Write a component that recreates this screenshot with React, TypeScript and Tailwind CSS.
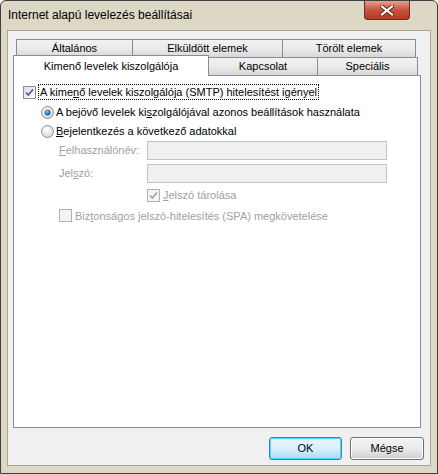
import React from 'react';

const font = { fontFamily: '"Liberation Sans", Arial, sans-serif' };

function CheckBox({ checked, disabled }: { checked?: boolean; disabled?: boolean }) {
  return (
    <span
      className={`relative inline-flex h-[13px] w-[13px] shrink-0 items-center justify-center border ${
        disabled ? 'border-[#b1b1b1] bg-[#f4f4f4]' : 'border-[#8e8f8f] bg-gradient-to-br from-[#dcdcdc] to-[#ffffff]'
      }`}
    >
      {checked && (
        <svg width="11" height="11" viewBox="0 0 11 11">
          <path
            d="M2 5.5 L4.3 8 L9 2.5"
            fill="none"
            stroke={disabled ? '#a4a4a4' : '#4a5f97'}
            strokeWidth="1.8"
          />
        </svg>
      )}
    </span>
  );
}

function Radio({ checked }: { checked?: boolean }) {
  return (
    <svg width="13" height="13" viewBox="0 0 13 13" className="shrink-0">
      <defs>
        <radialGradient id="rg" cx="0.4" cy="0.35" r="0.7">
          <stop offset="0" stopColor="#ffffff" />
          <stop offset="1" stopColor="#d4d4d4" />
        </radialGradient>
        <radialGradient id="dot" cx="0.4" cy="0.35" r="0.7">
          <stop offset="0" stopColor="#8ad2f5" />
          <stop offset="0.6" stopColor="#2b74b8" />
          <stop offset="1" stopColor="#1a4f82" />
        </radialGradient>
      </defs>
      <circle cx="6.5" cy="6.5" r="6" fill="url(#rg)" stroke="#8e8f8f" />
      {checked && <circle cx="6.5" cy="6.5" r="3" fill="url(#dot)" />}
    </svg>
  );
}

function Tab({ label, w, selected }: { label: string; w: string; selected?: boolean }) {
  return (
    <div
      className={`${w} flex items-center justify-center border border-[#898c95] text-[11px] text-black ${
        selected
          ? 'relative z-10 h-[21px] border-b-0 bg-white'
          : 'h-[19px] bg-gradient-to-b from-[#f2f2f2] via-[#ebebeb] to-[#d8d8d8]'
      }`}
    >
      {label}
    </div>
  );
}

export default function App() {
  return (
    <div
      className="flex h-[474px] w-[438px] flex-col rounded-t-[6px] border border-[#3f3f3f] bg-[#ddd8c6] text-black"
      style={font}
    >
      {/* title bar */}
      <div className="flex h-[29px] shrink-0 items-start justify-between">
        <span className="ml-[7px] mt-[7px] text-[12px] leading-[14px] text-black">
          Internet alapú levelezés beállításai
        </span>
        <button className="mr-[27px] flex h-[19px] w-[46px] items-center justify-center rounded-b-[4px] border border-t-0 border-[#6b2a22] bg-gradient-to-b from-[#e5a092] via-[#c6523f] to-[#b73a22]">
          <svg width="14" height="11" viewBox="0 0 14 11">
            <path d="M2 1.5 L12 9.5 M12 1.5 L2 9.5" stroke="#5a2018" strokeWidth="4" strokeLinecap="square" />
            <path d="M2 1.5 L12 9.5 M12 1.5 L2 9.5" stroke="#ffffff" strokeWidth="2.2" strokeLinecap="square" />
          </svg>
        </button>
      </div>

      {/* client area */}
      <div className="mx-[6px] mb-[7px] flex flex-1 flex-col border border-[#aaa594] bg-[#f0f0f0]">
        <div className="flex flex-col pl-[5px] pt-[8px]">
          <div className="flex pl-[3px]">
            <Tab label="Általános" w="w-[117px]" />
            <Tab label="Elküldött elemek" w="w-[151px] -ml-px" />
            <Tab label="Törölt elemek" w="w-[134px] -ml-px" />
          </div>
          <div className="-mt-[3px] flex items-end">
            <Tab label="Kimenő levelek kiszolgálója" w="w-[196px]" selected />
            <Tab label="Kapcsolat" w="w-[110px] -ml-px" />
            <Tab label="Speciális" w="w-[101px] -ml-px" />
          </div>
          {/* panel */}
          <div className="-mt-px flex h-[353px] w-[408px] flex-col border border-[#898c95] bg-white text-[11px]">
            <div className="ml-[9px] mt-[8px] flex items-center gap-[2px]">
              <CheckBox checked />
              <span className="border border-dotted border-black px-px leading-[14px]">
                A kime<u>n</u>ő levelek kiszolgálója (SMTP) hitelesítést igényel
              </span>
            </div>
            <div className="ml-[27px] mt-[5px] flex items-center gap-[2px]">
              <Radio checked />
              <span className="leading-[14px]">
                A bejövő levelek ki<u>s</u>zolgálójával azonos beállítások használata
              </span>
            </div>
            <div className="ml-[27px] mt-[5px] flex items-center gap-[2px]">
              <Radio />
              <span className="leading-[14px]">
                <u>B</u>ejelentkezés a következő adatokkal
              </span>
            </div>
            <div className="ml-[45px] mt-[3px] flex items-center text-[#a0a0a0]">
              <span className="w-[88px]">
                <u>F</u>elhasználónév:
              </span>
              <div className="h-[19px] w-[240px] border border-[#b8c5d3] bg-[#f0f0f0]" />
            </div>
            <div className="ml-[45px] mt-[4px] flex items-center text-[#a0a0a0]">
              <span className="w-[88px]">
                Jel<u>s</u>zó:
              </span>
              <div className="h-[19px] w-[240px] border border-[#b8c5d3] bg-[#f0f0f0]" />
            </div>
            <div className="ml-[133px] mt-[4px] flex items-center gap-[3px] text-[#a0a0a0]">
              <CheckBox checked disabled />
              <span>
                <u>J</u>elszó tárolása
              </span>
            </div>
            <div className="ml-[45px] mt-[4px] flex items-center gap-[3px] text-[#a0a0a0]">
              <CheckBox disabled />
              <span>
                Biz<u>t</u>onságos jelszó-hitelesítés (SPA) megkövetelése
              </span>
            </div>
          </div>
        </div>
        {/* buttons */}
        <div className="mt-[9px] flex justify-end gap-[8px] pr-[6px]">
          <button className="flex h-[23px] w-[73px] items-center justify-center rounded-[3px] border border-[#3c7fb1] bg-gradient-to-b from-[#eaf6fd] via-[#d9f0fc] to-[#a7d9f5] text-[11px] text-black shadow-[inset_0_0_0_1px_#48d8fb]">
            OK
          </button>
          <button className="flex h-[23px] w-[74px] items-center justify-center rounded-[3px] border border-[#707070] bg-gradient-to-b from-[#f2f2f2] via-[#ebebeb] to-[#cfcfcf] text-[11px] text-black shadow-[inset_0_0_0_1px_#fcfcfc]">
            Mégse
          </button>
        </div>
      </div>
    </div>
  );
}
